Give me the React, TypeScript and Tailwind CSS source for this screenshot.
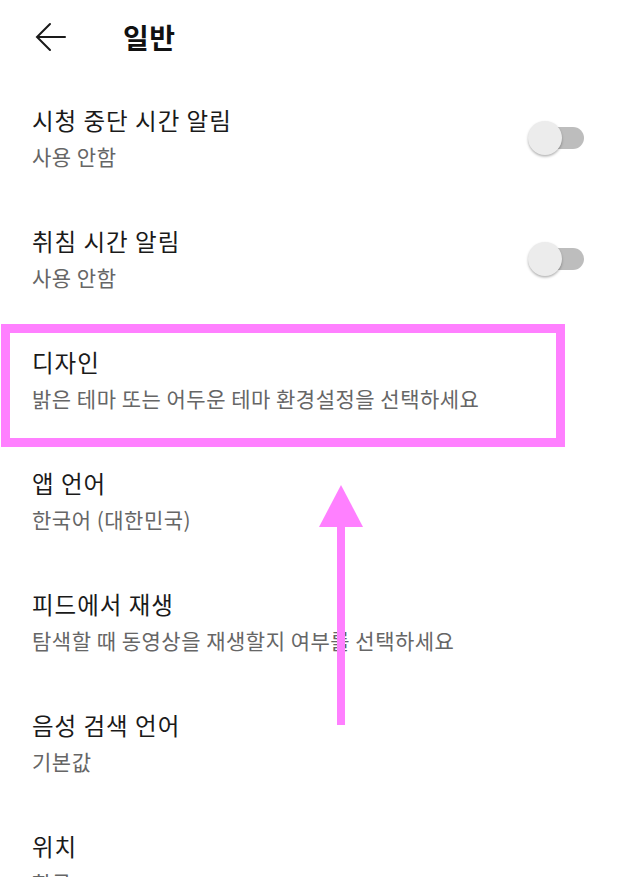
import { FC } from 'react'

interface SettingItem {
  title: string
  subtitle: string
  toggle?: boolean
}

const items: SettingItem[] = [
  { title: '시청 중단 시간 알림', subtitle: '사용 안함', toggle: true },
  { title: '취침 시간 알림', subtitle: '사용 안함', toggle: true },
  { title: '디자인', subtitle: '밝은 테마 또는 어두운 테마 환경설정을 선택하세요' },
  { title: '앱 언어', subtitle: '한국어 (대한민국)' },
  { title: '피드에서 재생', subtitle: '탐색할 때 동영상을 재생할지 여부를 선택하세요' },
  { title: '음성 검색 언어', subtitle: '기본값' },
  { title: '위치', subtitle: '한국' },
]

const BackArrow = () => (
  <svg width="32" height="30" viewBox="0 0 32 30" fill="none" stroke="#1a1a1a" strokeWidth="2" strokeLinecap="round">
    <path d="M30 15H3" />
    <path d="M15 2L2 15l13 13" />
  </svg>
)

const Switch = () => (
  <div className="relative h-[34px] w-[56px] shrink-0">
    <div className="absolute right-0 top-[6px] h-[22px] w-[46px] rounded-full bg-[#bdbdbd]" />
    <div className="absolute left-0 top-0 h-[34px] w-[34px] rounded-full bg-[#ececec] shadow-[0_1.5px_2.5px_rgba(0,0,0,0.3)]" />
  </div>
)

const Row: FC<{ item: SettingItem }> = ({ item }) => (
  <div className="flex h-[121px] items-center justify-between pl-8 pr-[43px] pt-[6px]">
    <div className="flex flex-col">
      <div className="text-[23.5px] leading-[32px] tracking-[1px] text-[#1a1a1a]">{item.title}</div>
      <div className="mt-[4px] text-[21px] leading-[32px] tracking-[0.5px] text-[#666666]">{item.subtitle}</div>
    </div>
    {item.toggle && <Switch />}
  </div>
)

const App = () => {
  return (
    <div
      className="relative h-[877px] w-[627px] overflow-hidden bg-white"
      style={{ fontFamily: '"Noto Sans CJK KR", "Noto Sans", sans-serif' }}
    >
      <div className="flex h-[74px] items-center pl-[35px]">
        <BackArrow />
        <h1 className="ml-[56px] text-[28px] font-semibold leading-none tracking-[0.5px] text-[#111111]">일반</h1>
      </div>
      <div className="flex flex-col">
        {items.map((item) => (
          <Row key={item.title} item={item} />
        ))}
      </div>

      {/* highlight frame around the design row */}
      <div className="pointer-events-none absolute left-[1px] top-[324px] h-[123px] w-[564px] border-[9px] border-[#ff80ff]" />

      {/* pointer arrow */}
      <svg className="pointer-events-none absolute left-[318px] top-[484px]" width="46" height="242" viewBox="0 0 46 242">
        <polygon points="23,1 1,43 45,43" fill="#ff80ff" />
        <rect x="19" y="42" width="8" height="199" fill="#ff80ff" />
      </svg>
    </div>
  )
}

export default App
